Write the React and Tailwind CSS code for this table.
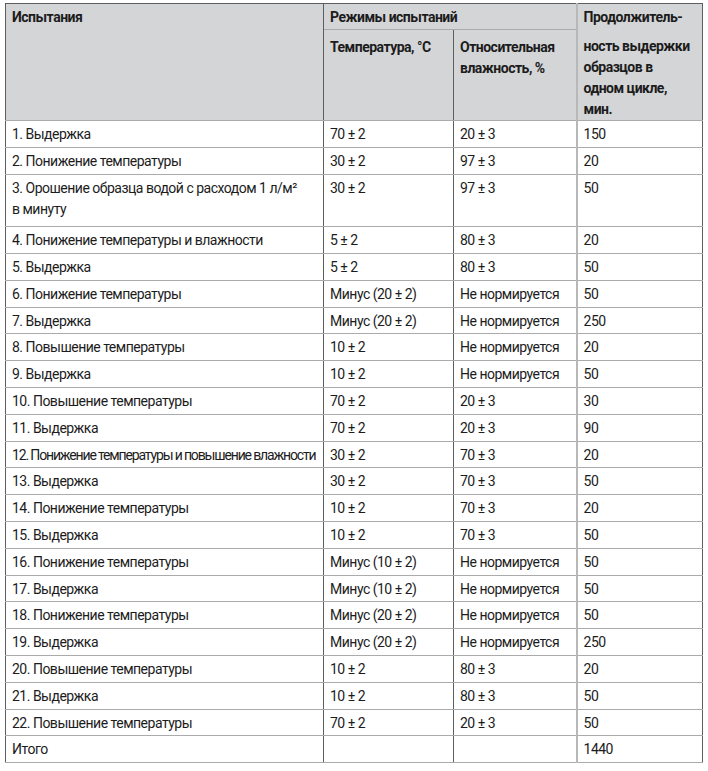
import React from "react";

const rows = [
  ["1. Выдержка", "70 ± 2", "20 ± 3", "150"],
  ["2. Понижение температуры", "30 ± 2", "97 ± 3", "20"],
  ["3. Орошение образца водой с расходом 1 л/м²", "30 ± 2", "97 ± 3", "50", "в минуту"],
  ["4. Понижение температуры и влажности", "5 ± 2", "80 ± 3", "20"],
  ["5. Выдержка", "5 ± 2", "80 ± 3", "50"],
  ["6. Понижение температуры", "Минус (20 ± 2)", "Не нормируется", "50"],
  ["7. Выдержка", "Минус (20 ± 2)", "Не нормируется", "250"],
  ["8. Повышение температуры", "10 ± 2", "Не нормируется", "20"],
  ["9. Выдержка", "10 ± 2", "Не нормируется", "50"],
  ["10. Повышение температуры", "70 ± 2", "20 ± 3", "30"],
  ["11. Выдержка", "70 ± 2", "20 ± 3", "90"],
  ["12. Понижение температуры и повышение влажности", "30 ± 2", "70 ± 3", "20"],
  ["13. Выдержка", "30 ± 2", "70 ± 3", "50"],
  ["14. Понижение температуры", "10 ± 2", "70 ± 3", "20"],
  ["15. Выдержка", "10 ± 2", "70 ± 3", "50"],
  ["16. Понижение температуры", "Минус (10 ± 2)", "Не нормируется", "50"],
  ["17. Выдержка", "Минус (10 ± 2)", "Не нормируется", "50"],
  ["18. Понижение температуры", "Минус (20 ± 2)", "Не нормируется", "50"],
  ["19. Выдержка", "Минус (20 ± 2)", "Не нормируется", "250"],
  ["20. Повышение температуры", "10 ± 2", "80 ± 3", "20"],
  ["21. Выдержка", "10 ± 2", "80 ± 3", "50"],
  ["22. Повышение температуры", "70 ± 2", "20 ± 3", "50"],
  ["Итого", "", "", "1440"],
];

// vertical rules are dark, horizontal rules are light grey
const cell = "align-top px-[6px] pt-[3px] whitespace-nowrap border-b border-b-[#ababab] border-r border-r-[#5e5e5e]";
const splitCol = "align-top px-[6px] pt-[3px] whitespace-nowrap border-b border-b-[#ababab] border-r-2 border-r-[#b8b8b8]";

export default function App() {
  return (
    <div
      className="w-[708px] h-[771px] bg-white pl-[5px] pt-[3px] text-[#1c1c1c] tracking-[-0.5px]"
      style={{ fontFamily: 'Roboto, "Liberation Sans", sans-serif' }}
    >
      <table className="table-fixed border-collapse w-[697px] text-[14px] leading-[21px] border border-[#5e5e5e]">
        <colgroup>
          <col className="w-[318px]" />
          <col className="w-[130px]" />
          <col className="w-[123px]" />
          <col className="w-[126px]" />
        </colgroup>
        <thead className="bg-[#d4d5d7] font-bold text-left">
          <tr className="h-[26px]">
            <th rowSpan={2} className={cell}>Испытания</th>
            <th colSpan={2} className={splitCol}>Режимы испытаний</th>
            <th rowSpan={2} className={cell}>
              <div className="mb-[8px]">Продолжитель-</div>
              <div>ность выдержки</div>
              <div>образцов в</div>
              <div>одном цикле,</div>
              <div>мин.</div>
            </th>
          </tr>
          <tr className="h-[90px]">
            <th className={cell + " pt-[7px]"}>Температура, °С</th>
            <th className={splitCol + " pt-[7px]"}>
              <div>Относительная</div>
              <div>влажность, %</div>
            </th>
          </tr>
        </thead>
        <tbody>
          {rows.map((r) => (
            <tr key={r[0]} className={r[4] ? "h-[52.6px]" : "h-[26.8px]"}>
              <td className={cell}>
                <div className={r[0].startsWith("12.") ? "tracking-[-1.15px]" : ""}>{r[0]}</div>
                {r[4] && <div>{r[4]}</div>}
              </td>
              <td className={cell}>{r[1]}</td>
              <td className={splitCol}>{r[2]}</td>
              <td className={cell}>{r[3]}</td>
            </tr>
          ))}
        </tbody>
      </table>
    </div>
  );
}
